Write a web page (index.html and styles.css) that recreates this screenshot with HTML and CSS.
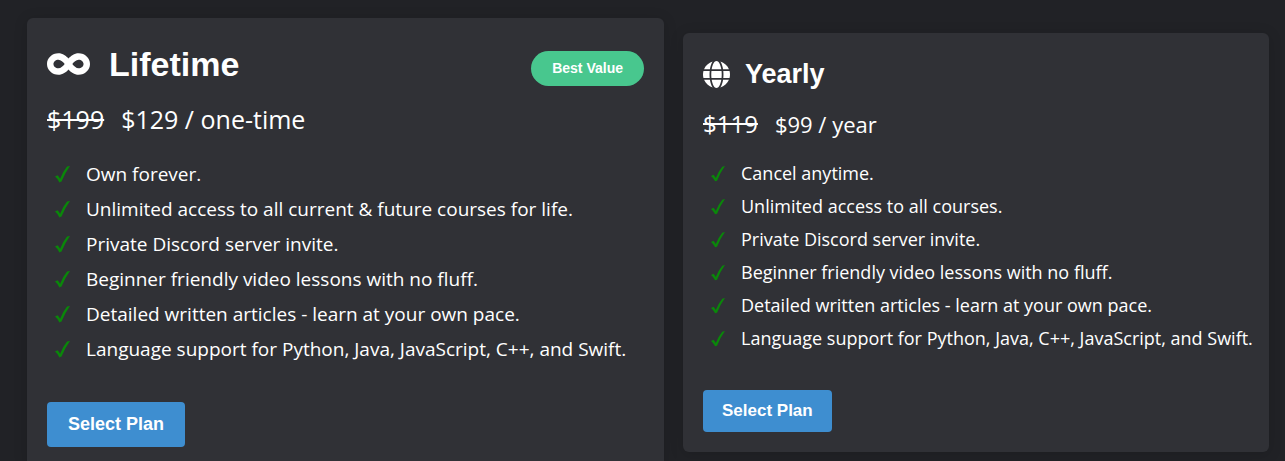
FILE: index.html
```html
<!DOCTYPE html>
<html lang="en">
<head>
  <meta charset="UTF-8">
  <meta name="viewport" content="width=device-width,initial-scale=1">
  <title>Pricing</title>
  <link rel="stylesheet" href="styles.css">
</head>
<body>
  <svg class="sprite" aria-hidden="true">
    <symbol id="check" viewBox="0 0 15 17">
      <path d="M0 10.6 L2.6 9.3 Q4.2 10.8 5.1 12.8 Q8 5.5 12 0.6 L15 0 Q10.2 6.5 6.5 15.6 L4.4 16.4 Q2.8 12.8 0 10.6z"/>
    </symbol>
  </svg>

  <main class="plans">
    <!-- Lifetime plan -->
    <section class="plan featured">
      <div class="plan-header">
        <svg class="plan-icon" viewBox="0 96 640 320" aria-hidden="true"><path d="M471.1 96C405 96 353.3 137.3 320 174.6 286.7 137.3 235 96 168.9 96 75.8 96 0 167.8 0 256s75.8 160 168.9 160c66.1 0 117.8-41.3 151.1-78.6 33.3 37.3 85 78.6 151.1 78.6 93.1 0 168.9-71.8 168.9-160S564.2 96 471.1 96zM168.9 320c-40.2 0-72.9-28.7-72.9-64s32.7-64 72.9-64c38.2 0 73.4 36.1 94 64-20.4 27.6-55.9 64-94 64zm302.2 0c-38.2 0-73.4-36.1-94-64 20.4-27.6 55.9-64 94-64 40.2 0 72.9 28.7 72.9 64s-32.7 64-72.9 64z"/></svg>
        <h2>Lifetime</h2>
        <span class="badge">Best Value</span>
      </div>
      <p class="price"><s>$199</s> <span>$129 / one-time</span></p>
      <ul class="features">
        <li><svg><use href="#check"/></svg>Own forever.</li>
        <li><svg><use href="#check"/></svg>Unlimited access to all current &amp; future courses for life.</li>
        <li><svg><use href="#check"/></svg>Private Discord server invite.</li>
        <li><svg><use href="#check"/></svg>Beginner friendly video lessons with no fluff.</li>
        <li><svg><use href="#check"/></svg>Detailed written articles - learn at your own pace.</li>
        <li><svg><use href="#check"/></svg>Language support for Python, Java, JavaScript, C++, and Swift.</li>
      </ul>
      <button type="button">Select Plan</button>
    </section>

    <!-- Yearly plan -->
    <section class="plan">
      <div class="plan-header">
        <svg class="plan-icon" viewBox="0 8 496 496" aria-hidden="true"><path d="M336.5 160C322 70.7 287.8 8 248 8s-74 62.7-88.5 152h177zM152 256c0 22.2 1.2 43.5 3.3 64h185.3c2.1-20.5 3.3-41.8 3.3-64s-1.2-43.5-3.3-64H155.3c-2.1 20.5-3.3 41.8-3.3 64zm324.7-96c-28.6-67.9-86.5-120.4-158-141.6 24.4 33.8 41.2 84.7 50 141.6h108zM177.2 18.4C105.8 39.6 47.8 92.1 19.3 160h108c8.7-56.9 25.5-107.8 49.9-141.6zM487.4 192H372.7c2.1 21 3.3 42.5 3.3 64s-1.2 43-3.3 64h114.6c5.5-20.5 8.6-41.8 8.6-64s-3.1-43.5-8.5-64zM120 256c0-21.5 1.2-43 3.3-64H8.6C3.2 212.5 0 233.8 0 256s3.2 43.5 8.6 64h114.6c-2-21-3.2-42.5-3.2-64zm39.5 96c14.5 89.3 48.7 152 88.5 152s74-62.7 88.5-152h-177zm159.3 141.6c71.4-21.2 129.4-73.7 158-141.6h-108c-8.8 56.9-25.6 107.8-50 141.6zM19.3 352c28.6 67.9 86.5 120.4 158 141.6-24.4-33.8-41.2-84.7-50-141.6h-108z"/></svg>
        <h2>Yearly</h2>
      </div>
      <p class="price"><s>$119</s> <span>$99 / year</span></p>
      <ul class="features">
        <li><svg><use href="#check"/></svg>Cancel anytime.</li>
        <li><svg><use href="#check"/></svg>Unlimited access to all courses.</li>
        <li><svg><use href="#check"/></svg>Private Discord server invite.</li>
        <li><svg><use href="#check"/></svg>Beginner friendly video lessons with no fluff.</li>
        <li><svg><use href="#check"/></svg>Detailed written articles - learn at your own pace.</li>
        <li><svg><use href="#check"/></svg>Language support for Python, Java, C++, JavaScript, and Swift.</li>
      </ul>
      <button type="button">Select Plan</button>
    </section>
  </main>
</body>
</html>
```
FILE: styles.css
```css
* { box-sizing: border-box; }
body { background: #212226; color: #fff; font-family: "Open Sans", "Noto Sans", sans-serif; margin: 0; }
.sprite { display: none; }
.plans {
  display: grid;
  grid-template-columns: minmax(0, 637fr) minmax(0, 586fr);
  align-items: center;
  gap: 19px;
  padding: 18px 16px 0 27px;
}
.plan {
  background: #303136;
  border-radius: 6px;
  padding: 23px 20px 20px;
  box-shadow: 0 2px 14px rgba(0,0,0,0.15);
}
.plan-header { display: flex; align-items: center; }
.plan-icon { width: 27px; height: 27px; margin-right: 15px; fill: #fff; }
h2 { margin: 0; font: bold 27px/36px "Liberation Sans", Arial, sans-serif; }
.badge {
  align-self: flex-end;
  margin-left: auto;
  padding: 0 21px;
  border-radius: 18px;
  background: #48c78e;
  font: bold 14px/35px "Liberation Sans", Arial, sans-serif;
}
.price { display: flex; align-items: baseline; gap: 17px; margin: 16px 0 17px; font-size: 22px; line-height: 32px; }
.price s { font-size: 24px; }
.features { list-style: none; margin: 0 0 35px; padding: 0; font-size: 18px; line-height: 33px; }
.features li { display: flex; align-items: center; padding-left: 8px; white-space: nowrap; }
.features svg { flex: none; width: 14px; height: 16px; margin-right: 16px; fill: #0a870a; }
button {
  display: block;
  padding: 0 19px;
  border: none;
  border-radius: 4px;
  background: #3e8ed0;
  color: #fff;
  font: bold 17px/42px "Liberation Sans", Arial, sans-serif;
  cursor: pointer;
}
button:hover { background: #3082c5; }

/* larger featured card */
.plan.featured { padding-top: 24px; }
.featured .plan-icon { width: 43px; height: 22px; margin-right: 19px; }
.featured h2 { font-size: 34px; line-height: 44px; }
.featured .price { margin: 15px 0 20px; font-size: 25px; line-height: 36px; }
.featured .price s { font-size: 25px; }
.featured .features { font-size: 19px; line-height: 35px; }
.featured .features svg { width: 15px; height: 17px; margin-right: 16px; }
.featured button { padding: 0 21px; font-size: 18px; line-height: 45px; }
```
